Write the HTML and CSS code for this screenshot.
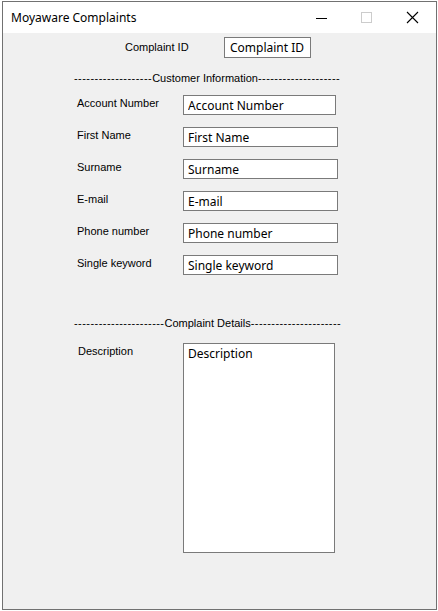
FILE: index.html
```html
<!DOCTYPE html>
<html lang="en">
  <head>
    <meta charset="UTF-8" />
    <title>Moyaware Complaints</title>
    <link rel="stylesheet" href="styles.css">
  </head>
  <body>
    <div class="window">
      <div class="titlebar">
        <span class="title">Moyaware Complaints</span>
        <div class="buttons">
          <svg class="btn" width="46" height="31" viewBox="0 0 46 31">
            <line x1="18" y1="16.5" x2="29" y2="16.5" stroke="#000" stroke-width="1" />
          </svg>
          <svg class="btn" width="46" height="31" viewBox="0 0 46 31">
            <rect x="17.5" y="10.5" width="10" height="10" fill="none" stroke="#cccccc" stroke-width="1" />
          </svg>
          <svg class="btn" width="46" height="31" viewBox="0 0 46 31">
            <path d="M17 10 L28 21 M28 10 L17 21" stroke="#000" stroke-width="1.1" />
          </svg>
        </div>
      </div>

      <div class="form">
        <div class="id-row">
          <label class="id-label">Complaint ID</label>
          <input class="box id-box" type="text" value="Complaint ID" />
        </div>

        <div class="divider first"><span class="dash">-------------------</span>Customer Information<span class="dash">--------------------</span></div>

        <div class="fields">
          <div class="row">
            <label>Account Number</label>
            <input class="box narrow" type="text" value="Account Number" />
          </div>
          <div class="row">
            <label>First Name</label>
            <input class="box" type="text" value="First Name" />
          </div>
          <div class="row">
            <label>Surname</label>
            <input class="box" type="text" value="Surname" />
          </div>
          <div class="row">
            <label>E-mail</label>
            <input class="box" type="text" value="E-mail" />
          </div>
          <div class="row">
            <label>Phone number</label>
            <input class="box" type="text" value="Phone number" />
          </div>
          <div class="row">
            <label>Single keyword</label>
            <input class="box" type="text" value="Single keyword" />
          </div>
        </div>

        <div class="divider second"><span class="dash">----------------------</span>Complaint Details<span class="dash">----------------------</span></div>

        <div class="row desc-row">
          <label>Description</label>
          <textarea class="box desc">Description</textarea>
        </div>
      </div>
    </div>
  </body>
</html>
```

FILE: styles.css
```css
html,
body {
  margin: 0;
  background: #ffffff;
}
.window {
  box-sizing: border-box;
  width: 435px;
  height: 609px;
  margin: 1px 0 0 2px;
  border: 1px solid #717171;
  background: #f0f0f0;
  display: flex;
  flex-direction: column;
}
.titlebar {
  height: 31px;
  background: #ffffff;
  display: flex;
  align-items: center;
  justify-content: space-between;
}
.title {
  font-family: "Noto Sans", sans-serif;
  font-size: 12px;
  color: #000;
  padding-left: 8px;
  padding-bottom: 1px;
}
.buttons {
  display: flex;
}
.btn {
  display: block;
}
.form {
  font-family: "Liberation Sans", Arial, sans-serif;
  font-size: 11px;
  color: #000;
}
.box {
  box-sizing: border-box;
  font-family: "Noto Sans", sans-serif;
  font-size: 12px;
  color: #000;
  background: #ffffff;
  border: 1px solid #7a7a7a;
  border-radius: 0;
  margin: 0;
  padding: 0 0 0 4px;
  height: 20px;
  width: 155px;
  outline: none;
}
.id-row {
  display: flex;
  align-items: center;
  margin-top: 4px;
  padding-left: 122px;
}
.id-label {
  width: 99px;
  padding-bottom: 1px;
}
.id-box {
  width: 87px;
  height: 21px;
  padding-left: 5px;
}
.divider {
  white-space: nowrap;
  padding-left: 71px;
  line-height: 13px;
}
.dash {
  letter-spacing: 0.45px;
}
.divider.first {
  margin-top: 14px;
}
.fields {
  display: flex;
  flex-direction: column;
  gap: 12px;
  margin-top: 10px;
}
.row {
  display: flex;
  align-items: flex-start;
  padding-left: 74px;
}
.row label {
  width: 106px;
  padding-top: 2px;
}
.box.narrow {
  width: 153px;
}
.divider.second {
  margin-top: 42px;
}
.desc-row {
  margin-top: 13px;
}
.desc-row label {
  padding-left: 1px;
  width: 105px;
  padding-top: 2px;
}
.desc {
  width: 152px;
  height: 210px;
  resize: none;
  padding: 1px 4px;
  overflow: hidden;
}
```
